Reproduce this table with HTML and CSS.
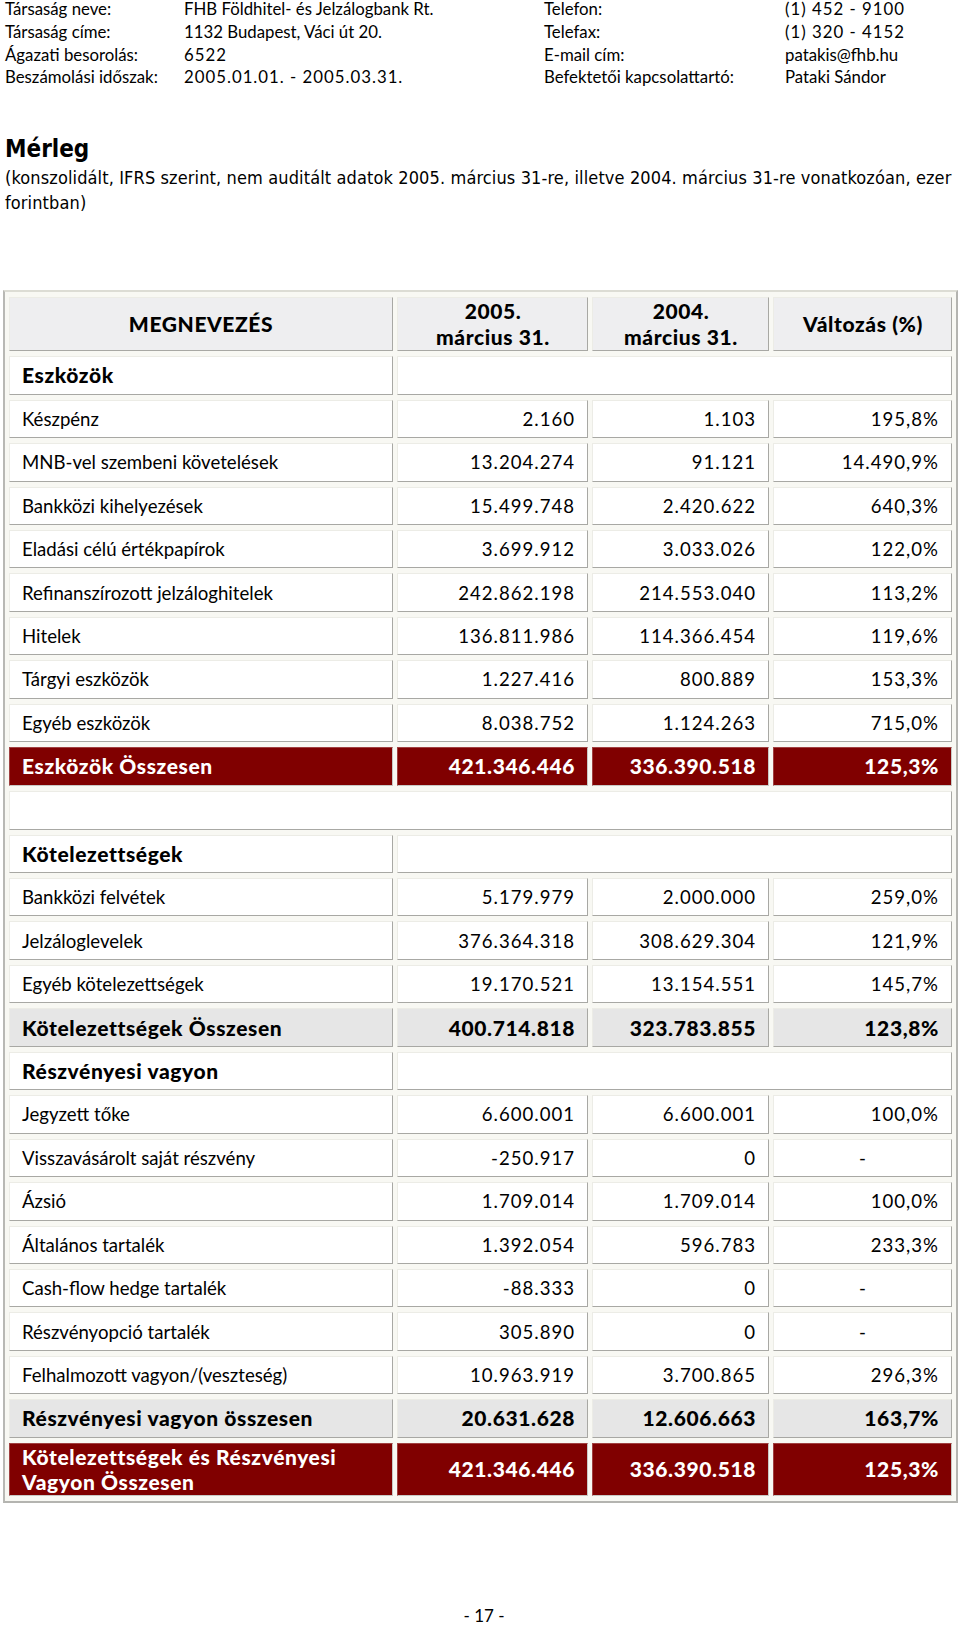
FILE: index.html
```html
<!DOCTYPE html>
<html lang="hu">
<head>
<meta charset="utf-8">
<title>Mérleg</title>
<link rel="stylesheet" href="styles.css">
</head>
<body>
<div class="info">
  <div>Társaság neve:</div><div>FHB Földhitel- és Jelzálogbank Rt.</div><div>Telefon:</div><div class="num">(1) 452 - 9100</div>
  <div>Társaság címe:</div><div>1132 Budapest, Váci út 20.</div><div>Telefax:</div><div class="num">(1) 320 - 4152</div>
  <div>Ágazati besorolás:</div><div class="num">6522</div><div>E-mail cím:</div><div>patakis@fhb.hu</div>
  <div>Beszámolási időszak:</div><div class="num">2005.01.01. - 2005.03.31.</div><div>Befektetői kapcsolattartó:</div><div>Pataki Sándor</div>
</div>

<h1 class="title">Mérleg</h1>
<p class="subtitle">(konszolidált, IFRS szerint, nem auditált adatok 2005. március 31-re, illetve 2004. március 31-re vonatkozóan, ezer forintban)</p>

<table class="balance">
  <colgroup>
    <col class="c1"><col class="c2"><col class="c3"><col class="c4">
  </colgroup>
  <tr class="head">
    <td class="ctr">MEGNEVEZÉS</td>
    <td class="ctr">2005.<br>március 31.</td>
    <td class="ctr">2004.<br>március 31.</td>
    <td class="ctr">Változás (%)</td>
  </tr>
  <tr class="section"><td>Eszközök</td><td colspan="3"></td></tr>
  <tr><td>Készpénz</td><td>2.160</td><td>1.103</td><td>195,8%</td></tr>
  <tr><td>MNB-vel szembeni követelések</td><td>13.204.274</td><td>91.121</td><td>14.490,9%</td></tr>
  <tr><td>Bankközi kihelyezések</td><td>15.499.748</td><td>2.420.622</td><td>640,3%</td></tr>
  <tr><td>Eladási célú értékpapírok</td><td>3.699.912</td><td>3.033.026</td><td>122,0%</td></tr>
  <tr><td>Refinanszírozott jelzáloghitelek</td><td>242.862.198</td><td>214.553.040</td><td>113,2%</td></tr>
  <tr><td>Hitelek</td><td>136.811.986</td><td>114.366.454</td><td>119,6%</td></tr>
  <tr><td>Tárgyi eszközök</td><td>1.227.416</td><td>800.889</td><td>153,3%</td></tr>
  <tr><td>Egyéb eszközök</td><td>8.038.752</td><td>1.124.263</td><td>715,0%</td></tr>
  <tr class="total"><td>Eszközök Összesen</td><td>421.346.446</td><td>336.390.518</td><td>125,3%</td></tr>
  <tr class="blank"><td colspan="4"></td></tr>
  <tr class="section"><td>Kötelezettségek</td><td colspan="3"></td></tr>
  <tr><td>Bankközi felvétek</td><td>5.179.979</td><td>2.000.000</td><td>259,0%</td></tr>
  <tr><td>Jelzáloglevelek</td><td>376.364.318</td><td>308.629.304</td><td>121,9%</td></tr>
  <tr><td>Egyéb kötelezettségek</td><td>19.170.521</td><td>13.154.551</td><td>145,7%</td></tr>
  <tr class="subtotal"><td>Kötelezettségek Összesen</td><td>400.714.818</td><td>323.783.855</td><td>123,8%</td></tr>
  <tr class="section"><td>Részvényesi vagyon</td><td colspan="3"></td></tr>
  <tr><td>Jegyzett tőke</td><td>6.600.001</td><td>6.600.001</td><td>100,0%</td></tr>
  <tr><td>Visszavásárolt saját részvény</td><td>-250.917</td><td>0</td><td class="ctr">-</td></tr>
  <tr><td>Ázsió</td><td>1.709.014</td><td>1.709.014</td><td>100,0%</td></tr>
  <tr><td>Általános tartalék</td><td>1.392.054</td><td>596.783</td><td>233,3%</td></tr>
  <tr><td>Cash-flow hedge tartalék</td><td>-88.333</td><td>0</td><td class="ctr">-</td></tr>
  <tr><td>Részvényopció tartalék</td><td>305.890</td><td>0</td><td class="ctr">-</td></tr>
  <tr><td>Felhalmozott vagyon/(veszteség)</td><td>10.963.919</td><td>3.700.865</td><td>296,3%</td></tr>
  <tr class="subtotal"><td>Részvényesi vagyon összesen</td><td>20.631.628</td><td>12.606.663</td><td>163,7%</td></tr>
  <tr class="total grand"><td>Kötelezettségek és Részvényesi<br>Vagyon Összesen</td><td>421.346.446</td><td>336.390.518</td><td>125,3%</td></tr>
</table>

<div class="pageno">- 17 -</div>
</body>
</html>
```

FILE: styles.css
```css
html, body {
  margin: 0;
  padding: 0;
  background: #ffffff;
  color: #000000;
}

body {
  width: 960px;
  font-family: "Lato", "Liberation Sans", sans-serif;
}

.info {
  display: grid;
  grid-template-columns: 179px 360px 241px auto;
  padding-left: 5px;
  margin-top: -2px;
  font-size: 16.8px;
  line-height: 22.8px;
}

.info .num {
  letter-spacing: 1px;
}

.title {
  margin: 46px 0 0 5px;
  font-family: "DejaVu Sans Condensed", "DejaVu Sans", sans-serif;
  font-weight: bold;
  font-size: 24px;
  line-height: 28px;
}

.subtitle {
  margin: 1.5px 0 0 5px;
  font-family: "DejaVu Sans Condensed", "DejaVu Sans", sans-serif;
  font-size: 18px;
  line-height: 25px;
  letter-spacing: 0.12px;
}

.balance {
  margin: 75.5px 0 0 3px;
  border-collapse: separate;
  border-spacing: 4px 5px;
  border-style: solid;
  border-width: 2px;
  border-color: #dcdcd4 #b4b4b0 #b4b4b0 #b8b8b4;
  background: #f8f8f3;
  table-layout: fixed;
  font-size: 18.6px;
}

.c1 { width: 384px; }
.c2 { width: 191px; }
.c3 { width: 177px; }
.c4 { width: 179px; }

.balance td {
  box-sizing: border-box;
  height: 38.44px;
  padding: 0 12px 0 13px;
  background: #ffffff;
  border-style: solid;
  border-width: 1px;
  border-color: #ecece6 #a8a8a4 #a8a8a4 #ecece6;
  text-align: right;
  vertical-align: middle;
  line-height: 22px;
  white-space: nowrap;
  letter-spacing: 1px;
}

.balance td:first-child {
  text-align: left;
  padding-left: 12px;
  letter-spacing: 0;
}

.balance td.ctr {
  text-align: center;
}

.head td,
.section td,
.subtotal td,
.total td {
  font-size: 21px;
  font-weight: 900;
  letter-spacing: 0.6px;
}

.head td {
  height: 54px;
  background: #eeeef0;
  line-height: 26px;
}

.head td:first-child {
  text-align: center;
  letter-spacing: 0.6px;
}

.subtotal td {
  background: #e6e6e6;
}

.total td {
  background: #800000;
  color: #ffffff;
  border-color: #a04040 #c8c8c4 #c8c8c4 #a04040;
}

.subtotal td:first-child,
.total td:first-child,
.section td:first-child {
  letter-spacing: 0.6px;
}

.grand td {
  height: 52px;
}

.grand td:first-child {
  line-height: 25.5px;
  white-space: normal;
}

.blank td {
  height: 39px;
}

.pageno {
  margin-top: 103px;
  padding-left: 8px;
  text-align: center;
  font-size: 17px;
  line-height: 20px;
}
```
